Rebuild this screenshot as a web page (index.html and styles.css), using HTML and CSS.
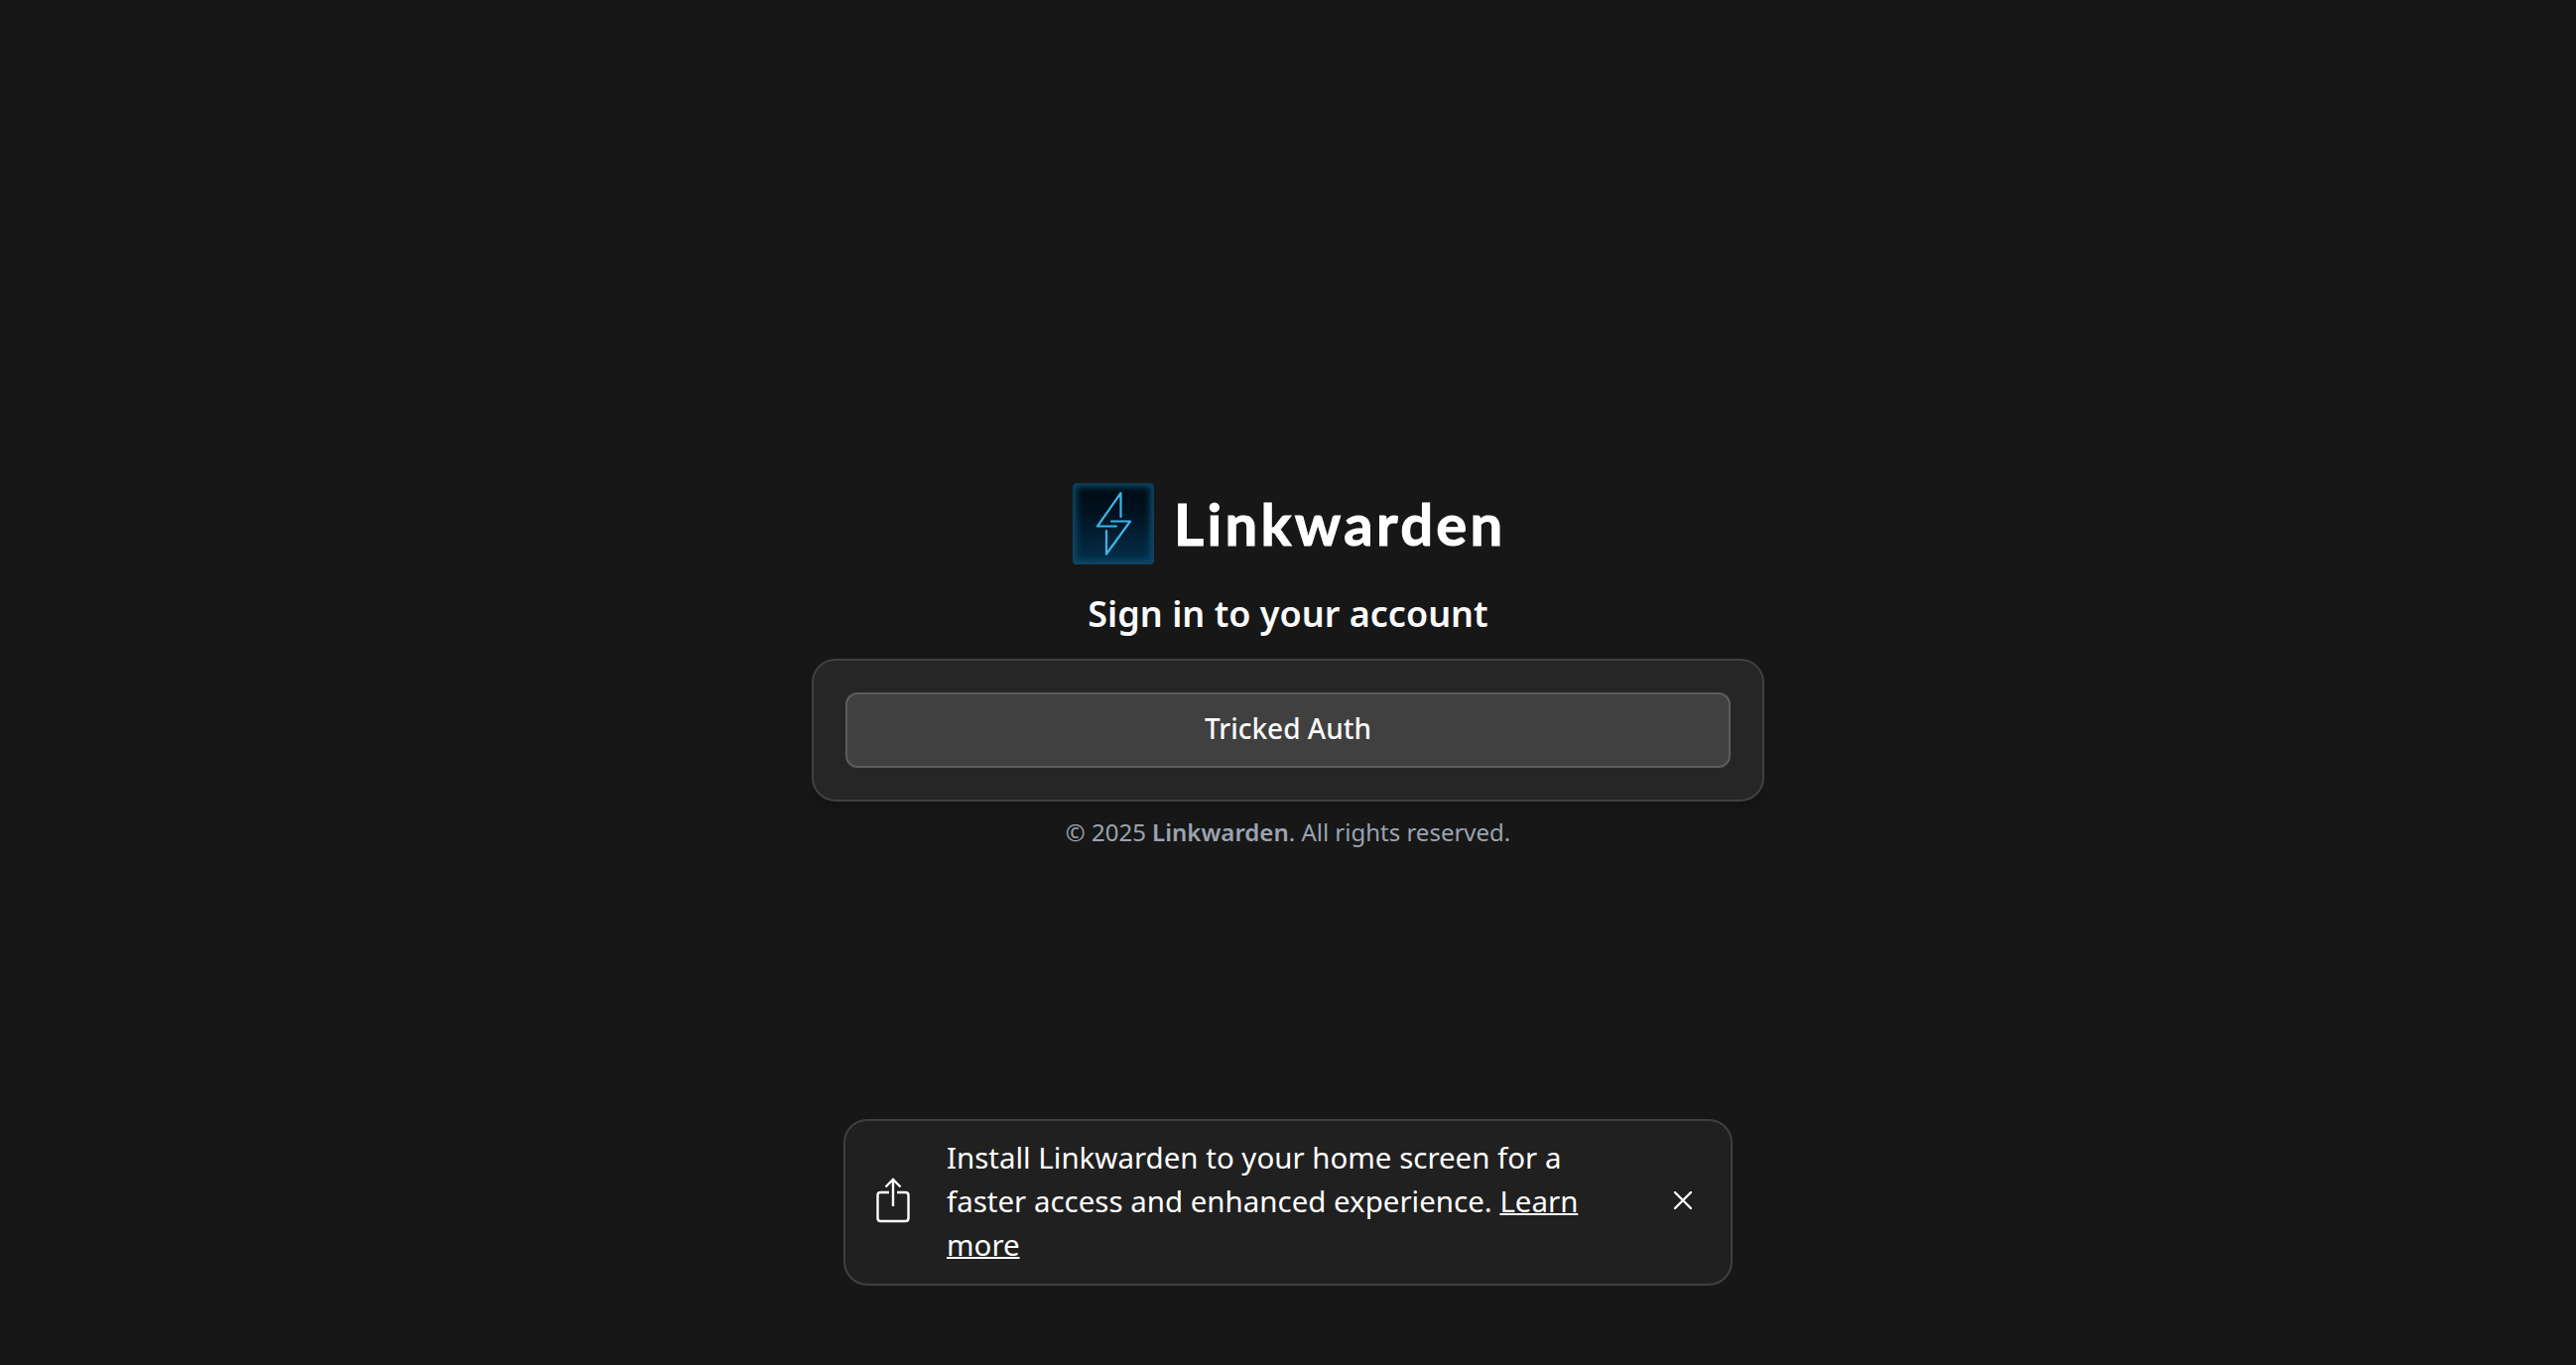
FILE: index.html
```html
<!DOCTYPE html>
<html lang="en">
<head>
<meta charset="utf-8">
<title>Linkwarden</title>
<link rel="stylesheet" href="styles.css">
</head>
<body>
<main class="login">
  <div class="brand">
    <svg class="brand-mark" viewBox="0 0 82 82" aria-hidden="true">
      <defs>
        <linearGradient id="bg" x1="0" y1="0" x2="0" y2="1">
          <stop offset="0" stop-color="#000911"/>
          <stop offset=".35" stop-color="#00121f"/>
          <stop offset="1" stop-color="#04304d"/>
        </linearGradient>
        <filter id="soft" x="-20%" y="-20%" width="140%" height="140%"><feGaussianBlur stdDeviation="3"/></filter>
        <clipPath id="tile"><rect width="82" height="82" rx="4"/></clipPath>
      </defs>
      <g clip-path="url(#tile)">
        <rect width="82" height="82" fill="url(#bg)"/>
        <rect x="0" y="0" width="82" height="82" rx="4" fill="none" stroke="#0d4a69" stroke-width="8" filter="url(#soft)"/>
      </g>
      <path d="M48.5 34V10L25 43.5H44M39 38.500H58L34 71.500V48" fill="none" stroke="#3bb5ea" stroke-width="2.200" stroke-linecap="round" stroke-linejoin="round"/>
    </svg>
    <span class="brand-name">Linkwarden</span>
  </div>
  <h1 class="title">Sign in to your account</h1>
  <section class="card">
    <button class="auth-button" type="button">Tricked Auth</button>
  </section>
  <p class="copyright">© 2025 <strong>Linkwarden</strong>. All rights reserved.</p>
</main>
<aside class="toast">
  <svg class="share" viewBox="0 0 34 46" aria-hidden="true">
    <path d="M13 15H4.500Q1.500 15 1.500 18V41Q1.500 44 4.500 44H29.500Q32.500 44 32.500 41V18Q32.500 15 29.500 15H21M17 29V3M9.500 9.500L17 2L24.500 9.500" fill="none" stroke="currentColor" stroke-width="2.400"/>
  </svg>
  <p class="toast-text">Install Linkwarden to your home screen for a faster access and enhanced experience. <a class="toast-link" href="#">Learn more</a></p>
  <button class="close" type="button" aria-label="Close">
    <svg class="close-icon" viewBox="0 0 20 20"><path d="M2 2L18 18M18 2L2 18" fill="none" stroke="currentColor" stroke-width="2.300" stroke-linecap="round"/></svg>
  </button>
</aside>
</body>
</html>
```

FILE: styles.css
```css
* { box-sizing: border-box; }
body {
  margin: 0;
  height: 1376px;
  display: flex;
  flex-direction: column;
  align-items: center;
  justify-content: space-between;
  padding: 487px 0 80px;
  overflow: hidden;
  background: #171717;
  color: #fff;
  font-family: "Noto Sans", sans-serif;
}
.login {
  width: 960px;
  display: flex;
  flex-direction: column;
  align-items: center;
}
.brand {
  display: flex;
  align-items: center;
  height: 82px;
  gap: 20px;
}
.brand-mark { width: 82px; height: 82px; }
.brand-name {
  width: 332px;
  font: 700 58px/82px Lato, sans-serif;
  letter-spacing: 3.3px;
  white-space: nowrap;
  -webkit-text-stroke: 1px #fff;
}
.title {
  margin: 24px 0 0;
  height: 71px;
  font-size: 36px;
  font-weight: 600;
  line-height: 52px;
  color: #fafafa;
}
.card {
  width: 960px;
  height: 144px;
  padding: 32px;
  border: 2px solid #404040;
  border-radius: 24px;
  background: #262626;
  box-shadow: 0 8px 12px -2px rgb(0 0 0 / 20%);
}
.auth-button {
  display: block;
  width: 100%;
  height: 76px;
  padding: 0 0 5px;
  border: 2px solid #5d5d60;
  border-radius: 12px;
  background: #404040;
  color: #fafafa;
  font: 500 28px/40px "Noto Sans", sans-serif;
}
.copyright {
  margin: 15px 0 0;
  font-size: 24px;
  line-height: 32px;
  color: #9ca3af;
}
.copyright strong { font-weight: 600; }
.toast {
  width: 896px;
  height: 168px;
  display: flex;
  align-items: center;
  padding: 0 36px 2px 31px;
  border: 2px solid #404040;
  border-radius: 24px;
  background: #202020;
}
.share { width: 34px; height: 46px; flex: none; margin-bottom: 2px; }
.toast-text {
  width: 648px;
  margin: 0 0 0 37px;
  font-size: 29.47px;
  line-height: 44px;
}
.toast-link {
  color: inherit;
  text-decoration: underline;
  text-decoration-thickness: 2px;
}
.close {
  margin-left: auto;
  margin-bottom: 2px;
  padding: 0;
  width: 24px;
  height: 24px;
  display: grid;
  place-items: center;
  border: 0;
  background: none;
  color: #fff;
}
.close-icon { width: 20px; height: 20px; }
```
